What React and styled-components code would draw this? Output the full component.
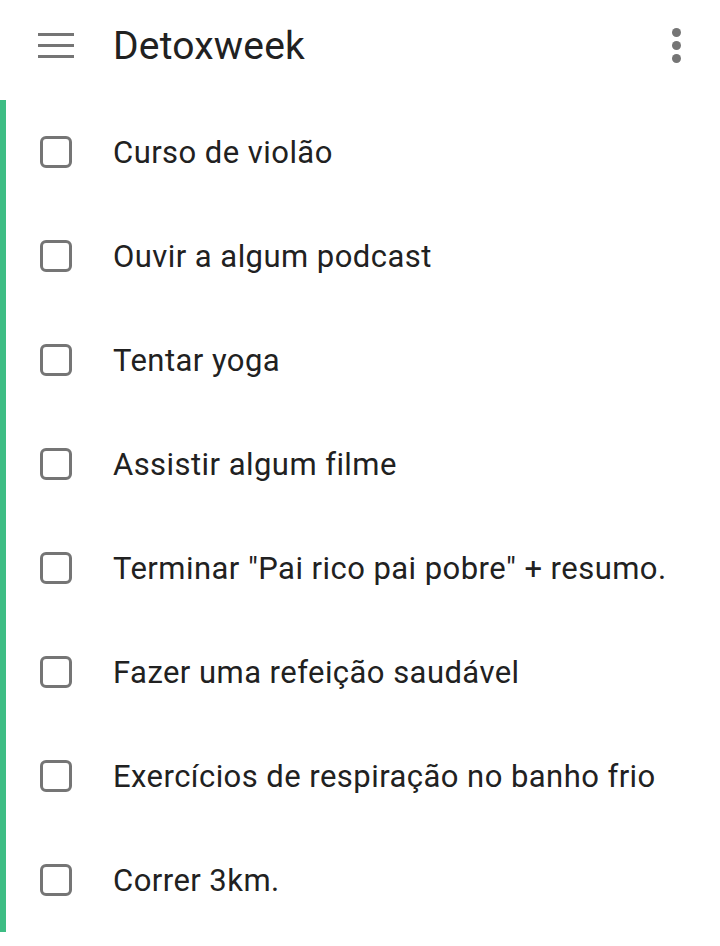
import React from 'react';
import styled, { createGlobalStyle } from 'styled-components';

const GlobalStyle = createGlobalStyle`
  html, body {
    margin: 0;
    padding: 0;
    background: #ffffff;
  }
  body {
    font-family: Roboto, 'Noto Sans', 'Liberation Sans', sans-serif;
    -webkit-font-smoothing: antialiased;
  }
`;

const Screen = styled.div`
  width: 720px;
  height: 946px;
  background: #ffffff;
  overflow: hidden;
`;

const Toolbar = styled.header`
  height: 100px;
  display: flex;
  align-items: center;
  padding: 0 39px 0 38px;
  box-sizing: border-box;
`;

const MenuButton = styled.div`
  width: 36px;
  display: flex;
  flex-direction: column;
  gap: 8px;
  margin-top: -10px;

  span {
    display: block;
    height: 3px;
    background: #757575;
  }
`;

const Title = styled.h1`
  flex: 1;
  margin: -8px 0 0 39px;
  font-size: 39px;
  font-weight: 400;
  color: #212121;
  letter-spacing: 0.2px;
`;

const MoreButton = styled.div`
  display: flex;
  flex-direction: column;
  gap: 4px;
  margin-top: -10px;

  span {
    width: 9px;
    height: 9px;
    border-radius: 50%;
    background: #757575;
  }
`;

const List = styled.ul`
  list-style: none;
  margin: 0;
  padding: 0;
  border-left: 6px solid #3dbd84;
`;

const Row = styled.li`
  height: 104px;
  display: flex;
  align-items: center;
  padding-left: 34px;
`;

const Box = styled.span`
  width: 32px;
  height: 32px;
  box-sizing: border-box;
  border: 3px solid #757575;
  border-radius: 6px;
  flex-shrink: 0;
`;

const Label = styled.span`
  margin-left: 41px;
  font-size: 31px;
  letter-spacing: 0.45px;
  color: #212121;
  white-space: nowrap;
`;

const items = [
  'Curso de violão',
  'Ouvir a algum podcast',
  'Tentar yoga',
  'Assistir algum filme',
  'Terminar "Pai rico pai pobre" + resumo.',
  'Fazer uma refeição saudável',
  'Exercícios de respiração no banho frio',
  'Correr 3km.',
];

const App = () => (
  <>
    <GlobalStyle />
    <Screen>
      <Toolbar>
        <MenuButton>
          <span />
          <span />
          <span />
        </MenuButton>
        <Title>Detoxweek</Title>
        <MoreButton>
          <span />
          <span />
          <span />
        </MoreButton>
      </Toolbar>
      <List>
        {items.map((item) => (
          <Row key={item}>
            <Box />
            <Label>{item}</Label>
          </Row>
        ))}
      </List>
    </Screen>
  </>
);

export default App;
